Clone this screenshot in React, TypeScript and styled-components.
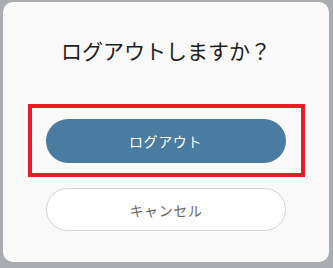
import { FC } from 'react';
import styled, { createGlobalStyle } from 'styled-components';

const GlobalStyle = createGlobalStyle`
  html, body {
    margin: 0;
    padding: 0;
    background: #a9acb0;
  }
  body {
    font-family: 'Noto Sans CJK JP', 'Noto Sans', sans-serif;
  }
`;

const Screen = styled.div`
  width: 333px;
  height: 268px;
  box-sizing: border-box;
  padding: 2px 4px 6px 3px;
`;

const Dialog = styled.div`
  height: 100%;
  background: #f9f9f9;
  border-radius: 10px;
  display: flex;
  flex-direction: column;
  align-items: center;
  padding-top: 33px;
  box-sizing: border-box;
`;

const Title = styled.h2`
  margin: 0;
  font-size: 21px;
  line-height: 30px;
  font-weight: 400;
  color: #1e1e1e;
`;

const Highlight = styled.div`
  margin-top: 39px;
  width: 277px;
  box-sizing: border-box;
  border: 4px solid #ed1c24;
  padding: 11px 16px 10px 14px;
`;

const PillButton = styled.button<{ $primary?: boolean }>`
  display: block;
  width: 240px;
  height: ${(p) => (p.$primary ? '44px' : '43px')};
  border-radius: 22px;
  box-sizing: border-box;
  font-family: inherit;
  font-size: 14px;
  font-weight: 400;
  letter-spacing: 0.6px;
  cursor: pointer;
  background: ${(p) => (p.$primary ? '#4a7ba0' : '#ffffff')};
  color: ${(p) => (p.$primary ? '#ffffff' : '#66665f')};
  border: ${(p) => (p.$primary ? 'none' : '1px solid #d4d4d4')};
`;

const CancelButton = styled(PillButton)`
  margin-top: 11px;
`;

const App: FC = () => {
  return (
    <>
      <GlobalStyle />
      <Screen>
        <Dialog>
          <Title>ログアウトしますか？</Title>
          <Highlight>
            <PillButton $primary>ログアウト</PillButton>
          </Highlight>
          <CancelButton>キャンセル</CancelButton>
        </Dialog>
      </Screen>
    </>
  );
};

export default App;
